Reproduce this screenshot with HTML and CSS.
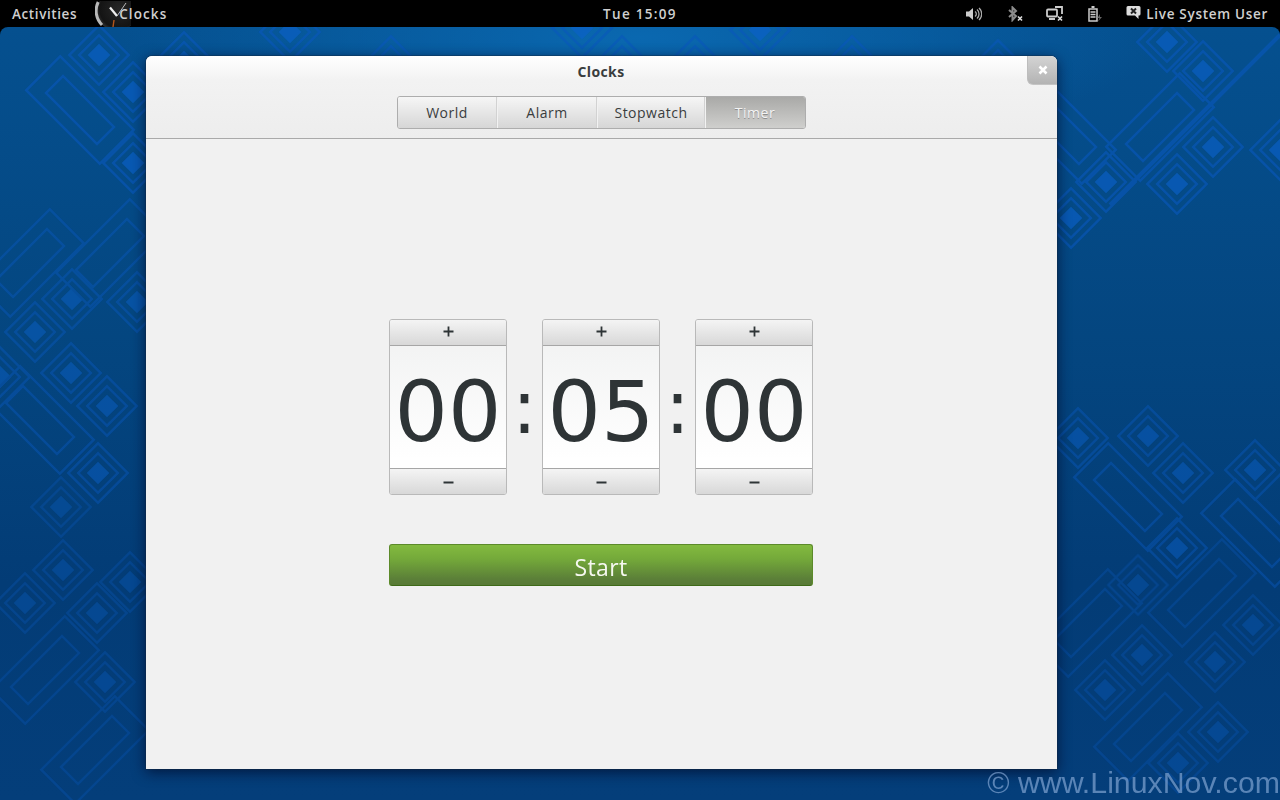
FILE: index.html
```html
<!DOCTYPE html>
<html lang="en">
<head>
<meta charset="utf-8">
<title>Clocks</title>
<link rel="stylesheet" href="styles.css">
</head>
<body>
<div class="screen">
  <header class="panel">
    <div class="panel-left">
      <span class="panel-text">Activities</span>
      <svg class="app-icon" width="36" height="27" viewBox="0 0 36 27">
        <defs><radialGradient id="dial" cx="0.55" cy="0.45" r="0.6"><stop offset="0" stop-color="#262626"/><stop offset="0.8" stop-color="#141414"/><stop offset="1" stop-color="#3a3a3a"/></radialGradient></defs>
        <circle cx="22" cy="10" r="20" fill="url(#dial)"/>
        <path d="M3.200 1A20 20 0 0 0 7 24" fill="none" stroke="#b8b8b8" stroke-width="3"/>
        <path d="M15 6.500L22 15" stroke="#eee" stroke-width="2.200"/>
        <path d="M22 15L31 2" stroke="#bbb" stroke-width="1"/>
        <path d="M19 19L18 26" stroke="#b4561c" stroke-width="1.400"/>
      </svg>
      <span class="panel-text app-name">Clocks</span>
    </div>
    <div class="panel-center panel-text">Tue 15:09</div>
    <div class="panel-right">
      <svg class="tray tray-volume" width="16" height="14" viewBox="0 0 16 14"><path d="M0 4.500H3L7 1V13L3 9.500H0Z" fill="#ccc"/><path d="M9 4.500A3 3 0 0 1 9 9.500M11 2.500A6 6 0 0 1 11 11.500M13 1A8 8 0 0 1 13 13" fill="none" stroke="#aaa" stroke-width="1.300"/></svg>
      <svg class="tray tray-bt" width="15" height="16" viewBox="0 0 15 16"><path d="M1 4L8 10L4.500 14V1.500L8 5L1 11" fill="none" stroke="#8c8c8c" stroke-width="2"/><path d="M10 10.500L14 14.500M14 10.500L10 14.500" stroke="#ddd" stroke-width="1.600"/></svg>
      <svg class="tray tray-net" width="18" height="16" viewBox="0 0 18 16"><rect x="1" y="3.500" width="10" height="7" rx="1" fill="none" stroke="#ccc" stroke-width="1.800"/><path d="M3 13H9" stroke="#ccc" stroke-width="2"/><path d="M9 1H16V8" fill="none" stroke="#ccc" stroke-width="1.800"/><path d="M12 10.500L16 14.500M16 10.500L12 14.500" stroke="#ddd" stroke-width="1.600"/></svg>
      <svg class="tray tray-batt" width="14" height="16" viewBox="0 0 14 16"><path d="M1 3H9V15H1Z" fill="none" stroke="#ccc" stroke-width="1.500"/><path d="M3.500 1H6.500" stroke="#ccc" stroke-width="2"/><path d="M2.500 6H7.500M2.500 8.500H7.500M2.500 11H7.500" stroke="#ccc" stroke-width="1.300"/><path d="M12 8L9.500 12H11.500L10 15.500L14 11H12Z" fill="#666"/></svg>
      <svg class="tray tray-chat" width="15" height="15" viewBox="0 0 15 15"><path d="M2 1H13A1.500 1.500 0 0 1 14.500 2.500V9A1.500 1.500 0 0 1 13 10.500H12.500V14L9 10.500H2A1.500 1.500 0 0 1 .5 9V2.500A1.500 1.500 0 0 1 2 1Z" fill="#ddd"/><path d="M5 3.500L10 8.500M10 3.500L5 8.500" stroke="#222" stroke-width="2"/></svg>
      <span class="panel-text user-name">Live System User</span>
    </div>
  </header>

  <main class="desktop">
    <svg class="wallpaper" width="1280" height="773" viewBox="0 27 1280 773" aria-hidden="true">
      <defs>
        <g id="dia">
          <rect x="-21" y="-21" width="42" height="42" class="ring"/>
          <rect x="-14" y="-14" width="28" height="28" class="ring thin"/>
          <rect x="-8" y="-8" width="16" height="16" class="core"/>
        </g>
        <g id="bar">
          <rect x="-52" y="-24" width="104" height="48" class="ring"/>
          <rect x="-36" y="-12" width="72" height="24" class="ring thin"/>
        </g>
      </defs>
      <g class="upper">
        <use href="#dia" transform="translate(99 55) rotate(45)"/>
        <use href="#dia" transform="translate(133 92) rotate(45)"/>
        <use href="#dia" transform="translate(133 163) rotate(45)"/>
        <use href="#bar" transform="translate(80 110) rotate(45)"/>
        <use href="#dia" transform="translate(184 62) rotate(45)"/>
        <use href="#dia" transform="translate(290 32) rotate(45)"/>
        <use href="#dia" transform="translate(391 66) rotate(45)"/>
        <use href="#dia" transform="translate(582 28) rotate(45)"/>
        <use href="#dia" transform="translate(622 66) rotate(45)"/>
        <use href="#dia" transform="translate(695 66) rotate(45)"/>
        <use href="#dia" transform="translate(760 30) rotate(45)"/>
        <use href="#dia" transform="translate(852 66) rotate(45)"/>
        <use href="#dia" transform="translate(998 70) rotate(45)"/>
        <use href="#dia" transform="translate(1167 42) rotate(45)"/>
        <use href="#dia" transform="translate(1203 71) rotate(45)"/>
        <use href="#dia" transform="translate(1213 147) rotate(45)"/>
        <use href="#dia" transform="translate(1106 182) rotate(45)"/>
        <use href="#dia" transform="translate(1177 184) rotate(45)"/>
        <use href="#dia" transform="translate(1071 218) rotate(45)"/>
        <use href="#dia" transform="translate(1280 150) rotate(45)"/>
        <use href="#bar" transform="translate(1160 127) rotate(-45)"/>
        <use href="#bar" transform="translate(1062 130) rotate(45)"/>
        <path class="band" d="M1110 205L1290 25"/>
      </g>
      <g class="middle">
        <use href="#dia" transform="translate(72 299) rotate(45)"/>
        <use href="#dia" transform="translate(35 332) rotate(45)"/>
        <use href="#dia" transform="translate(71 373) rotate(45)"/>
        <use href="#dia" transform="translate(107 406) rotate(45)"/>
        <use href="#dia" transform="translate(98 473) rotate(45)"/>
        <use href="#dia" transform="translate(137 302) rotate(45)"/>
        <use href="#dia" transform="translate(0 377) rotate(45)"/>
        <use href="#bar" transform="translate(40 420) rotate(45)"/>
        <use href="#bar" transform="translate(110 253) rotate(-45)"/>
        <use href="#bar" transform="translate(30 263) rotate(-45)"/>
        <use href="#dia" transform="translate(1078 438) rotate(45)"/>
        <use href="#dia" transform="translate(1148 436) rotate(45)"/>
        <use href="#dia" transform="translate(1183 473) rotate(45)"/>
        <use href="#dia" transform="translate(1255 470) rotate(45)"/>
        <use href="#dia" transform="translate(1177 548) rotate(45)"/>
        <use href="#bar" transform="translate(1128 497) rotate(45)"/>
        <use href="#bar" transform="translate(1255 533) rotate(45)"/>
      </g>
      <g class="lower">
        <use href="#dia" transform="translate(61 507) rotate(45)"/>
        <use href="#dia" transform="translate(63 570) rotate(45)"/>
        <use href="#dia" transform="translate(130 582) rotate(45)"/>
        <use href="#dia" transform="translate(25 603) rotate(45)"/>
        <use href="#dia" transform="translate(97 613) rotate(45)"/>
        <use href="#dia" transform="translate(105 682) rotate(45)"/>
        <use href="#bar" transform="translate(45 670) rotate(-45)"/>
        <use href="#bar" transform="translate(95 750) rotate(-45)"/>
        <use href="#dia" transform="translate(1138 585) rotate(45)"/>
        <use href="#dia" transform="translate(1253 625) rotate(45)"/>
        <use href="#dia" transform="translate(1142 655) rotate(45)"/>
        <use href="#dia" transform="translate(1215 662) rotate(45)"/>
        <use href="#dia" transform="translate(1105 690) rotate(45)"/>
        <use href="#dia" transform="translate(1218 732) rotate(45)"/>
        <use href="#dia" transform="translate(1178 763) rotate(45)"/>
        <use href="#bar" transform="translate(1202 593) rotate(-45)"/>
        <use href="#bar" transform="translate(1088 623) rotate(-45)"/>
        <use href="#bar" transform="translate(1148 727) rotate(-45)"/>
      </g>
    </svg>

    <section class="window">
      <div class="titlebar">
        <div class="title">Clocks</div>
        <button class="close" type="button"><svg width="10" height="10" viewBox="0 0 10 10"><path d="M1.500 1.500L8.500 8.500M8.500 1.500L1.500 8.500" stroke="#fff" stroke-width="2.600"/></svg></button>
        <nav class="tabs">
          <span class="tab tab-world">World</span>
          <span class="tab tab-alarm">Alarm</span>
          <span class="tab tab-stop">Stopwatch</span>
          <span class="tab tab-timer">Timer</span>
        </nav>
      </div>
      <div class="content">
        <div class="timer">
          <div class="spinners">
            <div class="spinner">
              <div class="step step-up"><svg width="11" height="11" viewBox="0 0 11 11"><path d="M.5 5.500H10.500M5.500 .5V10.500" class="glyph"/></svg></div>
              <div class="value">00</div>
              <div class="step step-down"><svg width="11" height="11" viewBox="0 0 11 11"><path d="M.5 5.500H10.500" class="glyph"/></svg></div>
            </div>
            <div class="colon">:</div>
            <div class="spinner">
              <div class="step step-up"><svg width="11" height="11" viewBox="0 0 11 11"><path d="M.5 5.500H10.500M5.500 .5V10.500" class="glyph"/></svg></div>
              <div class="value">05</div>
              <div class="step step-down"><svg width="11" height="11" viewBox="0 0 11 11"><path d="M.5 5.500H10.500" class="glyph"/></svg></div>
            </div>
            <div class="colon">:</div>
            <div class="spinner">
              <div class="step step-up"><svg width="11" height="11" viewBox="0 0 11 11"><path d="M.5 5.500H10.500M5.500 .5V10.500" class="glyph"/></svg></div>
              <div class="value">00</div>
              <div class="step step-down"><svg width="11" height="11" viewBox="0 0 11 11"><path d="M.5 5.500H10.500" class="glyph"/></svg></div>
            </div>
          </div>
          <button class="start" type="button">Start</button>
        </div>
      </div>
    </section>

    <div class="watermark">© www.LinuxNov.com</div>
  </main>
</div>
</body>
</html>
```
FILE: styles.css
```css
* { box-sizing: border-box; }
html, body { margin: 0; padding: 0; background: #000; }
body { width: 1280px; height: 800px; overflow: hidden; font-family: "Open Sans", "Noto Sans", sans-serif; }
.screen { display: flex; flex-direction: column; width: 1280px; height: 800px; }

.panel { display: grid; grid-template-columns: 1fr auto 1fr; align-items: center; height: 27px; flex: none; background: #000; padding: 0 12px; overflow: hidden; }
.panel-text { color: #cfcfcf; font-size: 13.5px; font-weight: 600; letter-spacing: .6px; line-height: 27px; padding-top: 1px; white-space: nowrap; }
.panel-left { display: flex; align-items: center; }
.panel-center { letter-spacing: 1.3px; }
.app-icon { margin-left: 18px; flex: none; }
.app-name { margin-left: -12px; position: relative; letter-spacing: 1.1px; }
.user-name { letter-spacing: .7px; }
.panel-right { display: flex; align-items: center; justify-content: flex-end; }
.tray { flex: none; }
.tray-volume { margin-right: 26px; }
.tray-bt { margin-right: 23px; }
.tray-net { margin-right: 24px; }
.tray-batt { margin-right: 24px; }
.tray-chat { margin-right: 5px; margin-top: -3px; }

.desktop { position: relative; flex: 1; border-radius: 8px 8px 0 0; overflow: hidden;
  background:
    radial-gradient(ellipse 520px 120px at 640px 10px, #0a68b0 0%, rgba(10,104,176,0) 100%),
    linear-gradient(180deg, #05508f 0%, #044680 40%, #033c76 72%, #043e7a 100%); }
.wallpaper { position: absolute; left: 0; top: 0; }
.ring { fill: none; stroke: #0a58bc; stroke-width: 2.5; }
.ring.thin { stroke-width: 2.5; }
.core { fill: #0c62cc; }
.band { fill: none; stroke: #0a58bc; stroke-width: 4; }
.upper { opacity: .62; }
.middle { opacity: .46; }
.lower { opacity: .32; }

.window { position: absolute; left: 146px; top: 29px; width: 911px; height: 713px; display: flex; flex-direction: column; background: #f1f1f1; border-radius: 6px 6px 0 0; box-shadow: 0 0 0 1px rgba(20,40,60,.35), 0 3px 14px rgba(0,10,40,.75); overflow: hidden; }
.titlebar { position: relative; flex: none; height: 83px; display: flex; flex-direction: column; align-items: center; background: linear-gradient(180deg, #fff 0%, #f2f2f2 30%, #ededed 100%); border-bottom: 1px solid #a9a9a9; }
.title { height: 40px; line-height: 32px; font-size: 14px; font-weight: 700; color: #3a3d3e; letter-spacing: .4px; padding-right: 1px; }
.close { position: absolute; right: 0; top: 0; width: 30px; height: 29px; padding: 0; border: 0; border-left: 1px solid #bdbdbd; border-bottom: 1px solid #c4c4c4; border-radius: 0 6px 0 6px; background: linear-gradient(180deg, #d4d4d4, #b3b3b3); display: flex; align-items: center; justify-content: center; }

.tabs { display: flex; width: 409px; height: 33px; border: 1px solid #adadad; border-radius: 3px; overflow: hidden; }
.tab { display: flex; align-items: center; justify-content: center; font-size: 14px; color: #3a3d3e; letter-spacing: .5px; background: linear-gradient(180deg, #f6f6f6, #d6d6d6); border-right: 1px solid #f2f2f2; box-shadow: inset -1px 0 0 #d2d2d2; padding-right: 1px; }
.tab-world { width: 100px; }
.tab-alarm { width: 100px; }
.tab-stop { width: 108px; }
.tab-timer { flex: 1; border-right: 0; box-shadow: none; color: #f4f4f4; text-shadow: 0 1px 0 #8e8e8e; background: linear-gradient(180deg, #a9a9a7, #cfcfcd); }

.content { flex: 1; display: flex; justify-content: center; padding: 180px 1px 0 0; }
.timer { width: 424px; display: flex; flex-direction: column; gap: 49px; }
.spinners { display: flex; justify-content: space-between; align-items: center; height: 176px; }
.spinner { width: 118px; height: 176px; display: flex; flex-direction: column; border: 1px solid #b9b9b9; border-radius: 3px; overflow: hidden; background: linear-gradient(180deg, #f0f1f1 0%, #fff 80%); }
.step { flex: none; display: flex; align-items: center; justify-content: center; background: linear-gradient(180deg, #f4f4f4, #d8d8d8); }
.step-up { border-bottom: 1px solid #a6a6a6; height: 26px; padding-bottom: 2px; }
.step-down { border-top: 1px solid #a6a6a6; height: 26px; padding-top: 2px; }
.glyph { fill: none; stroke: #2e3436; stroke-width: 1.800; }
.value { flex: 1; display: flex; align-items: center; justify-content: center; padding-top: 10px; font-size: 84px; line-height: 1; color: #2e3436; font-family: "DejaVu Sans", sans-serif; }
.colon { width: 35px; text-align: center; font-family: "DejaVu Sans", sans-serif; font-size: 74px; line-height: 1; color: #2e3436; }
.start { height: 42px; padding: 3px 0 0; border: 1px solid #5c8a2a; border-bottom-color: #3f6a18; border-radius: 3px; background: linear-gradient(180deg, #83ba3f 0%, #74a93a 35%, #5b7f38 85%, #587a36 100%); color: #f6f8f0; font-family: "Open Sans", sans-serif; font-size: 23px; letter-spacing: .4px; }

.watermark { position: absolute; right: 0; bottom: 1px; font-family: "Liberation Sans", sans-serif; font-size: 30.3px; line-height: 32px; color: rgba(135,170,215,.66); white-space: nowrap; }
```
